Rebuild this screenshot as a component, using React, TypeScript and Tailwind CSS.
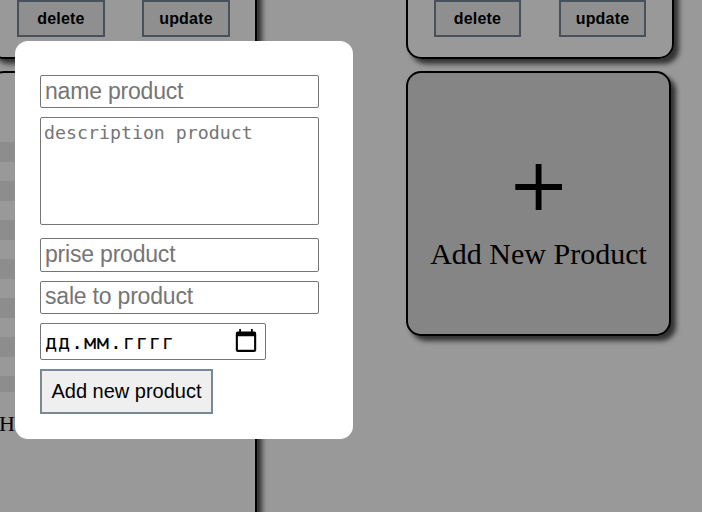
import type { ReactNode } from "react";

function Card({ className, children }: { className: string; children?: ReactNode }) {
  return (
    <section
      className={`shrink-0 rounded-[15px] border-2 border-black shadow-[5px_5px_5px_#555] ${className}`}
    >
      {children}
    </section>
  );
}

function CardActions({ className }: { className: string }) {
  const button =
    "h-[37px] border-2 border-[#778899] bg-[#efefef] font-['Liberation_Sans',Arial,sans-serif] text-base tracking-[0.2px] font-bold leading-none text-black";
  return (
    <div className={`grid h-full content-end pb-5 pl-[26px] ${className}`}>
      <button className={button}>delete</button>
      <button className={button}>update</button>
    </div>
  );
}

const stripes = Array.from({ length: 13 }, (_, i) => i);

function PictureCard() {
  return (
    <Card className="h-[480px] w-[268px]">
      <div className="mt-[69px] flex h-[250px] flex-col overflow-hidden">
        {stripes.map((i) => (
          <div key={i} className={`h-[19.5px] shrink-0 ${i % 2 === 0 ? "bg-[#ececec]" : "bg-white"}`} />
        ))}
      </div>
      <p className="mt-[19px] pl-[8px] text-[22px] leading-[25px]">H</p>
    </Card>
  );
}

function AddCard() {
  return (
    <Card className="flex h-[265px] w-[265px] flex-col items-center bg-[#dedede] pt-[90px]">
      <svg width="49" height="48" viewBox="0 0 49 48">
        <path d="M1.300 21H48V27H1.300ZM21.700 1H27.500V47H21.700Z" />
      </svg>
      <p className="mt-[26px] whitespace-nowrap text-[30px] leading-[34px]">Add New Product</p>
    </Card>
  );
}

function CalendarIcon() {
  return (
    <svg width="22" height="24" viewBox="0 0 22 24" className="mb-0.5">
      <path
        fillRule="evenodd"
        d="M4.200 0h1.800v2.500h10V0h1.800v2.500h1.400a2 2 0 0 1 2 2v16.500a2 2 0 0 1-2 2h-16.400a2 2 0 0 1-2-2v-16.500a2 2 0 0 1 2-2h1.400ZM2.900 7.300v13.500h16.200V7.300Z"
      />
    </svg>
  );
}

function ProductForm() {
  const field =
    "block w-[279px] rounded-[2px] border border-[#767676] bg-white placeholder:text-[#757575] placeholder:opacity-100";
  const line = `${field} px-1 text-[23px] leading-[26px] tracking-[-0.2px]`;
  return (
    <form className="absolute left-[15px] top-[41px] h-[398px] w-[338px] rounded-[13px] bg-white pl-[25px] pt-[34px] font-['Liberation_Sans',Arial,sans-serif]">
      <input className={`h-[33px] ${line}`} placeholder="name product" />
      <textarea
        className={`mt-[9px] h-[108px] resize-none px-[3px] py-[3px] font-['DejaVu_Sans_Mono',monospace] text-[18.25px] leading-[23px] ${field}`}
        placeholder="description product"
      />
      <input className={`mt-[13px] h-[34px] pb-0.5 ${line}`} placeholder="prise product" />
      <input className={`mt-[9px] h-[33px] pb-0.5 ${line}`} placeholder="sale to product" />
      <div className="mt-[9px] flex h-[37px] w-[226px] items-center justify-between rounded-[2px] border border-[#767676] pl-1 pr-2 font-['DejaVu_Sans_Mono',monospace] text-[20.3px] leading-none">
        <span className="pt-0.5 tracking-[0.75px]">дд.мм.гггг</span>
        <CalendarIcon />
      </div>
      <button
        type="button"
        className="mt-[9px] h-[45px] w-[173px] whitespace-nowrap border-2 border-[#778899] bg-[#efefef] pb-0.5 text-[20px] leading-none"
      >
        Add new product
      </button>
    </form>
  );
}

export default function App() {
  return (
    <main className="relative h-[512px] w-[702px] overflow-hidden bg-white font-['Liberation_Serif','Times_New_Roman',serif] text-black">
      <div className="-ml-[11px] -mt-[40px] flex gap-[149px]">
        <div className="flex flex-col gap-3">
          <Card className="h-[99px] w-[268px]">
            <CardActions className="grid-cols-[88px_88px] gap-[37px]" />
          </Card>
          <PictureCard />
        </div>
        <div className="flex flex-col gap-3">
          <Card className="h-[99px] w-[268px]">
            <CardActions className="grid-cols-[87px_87px] gap-[38px]" />
          </Card>
          <AddCard />
        </div>
      </div>
      <div className="absolute inset-0 bg-black/40" />
      <ProductForm />
    </main>
  );
}
